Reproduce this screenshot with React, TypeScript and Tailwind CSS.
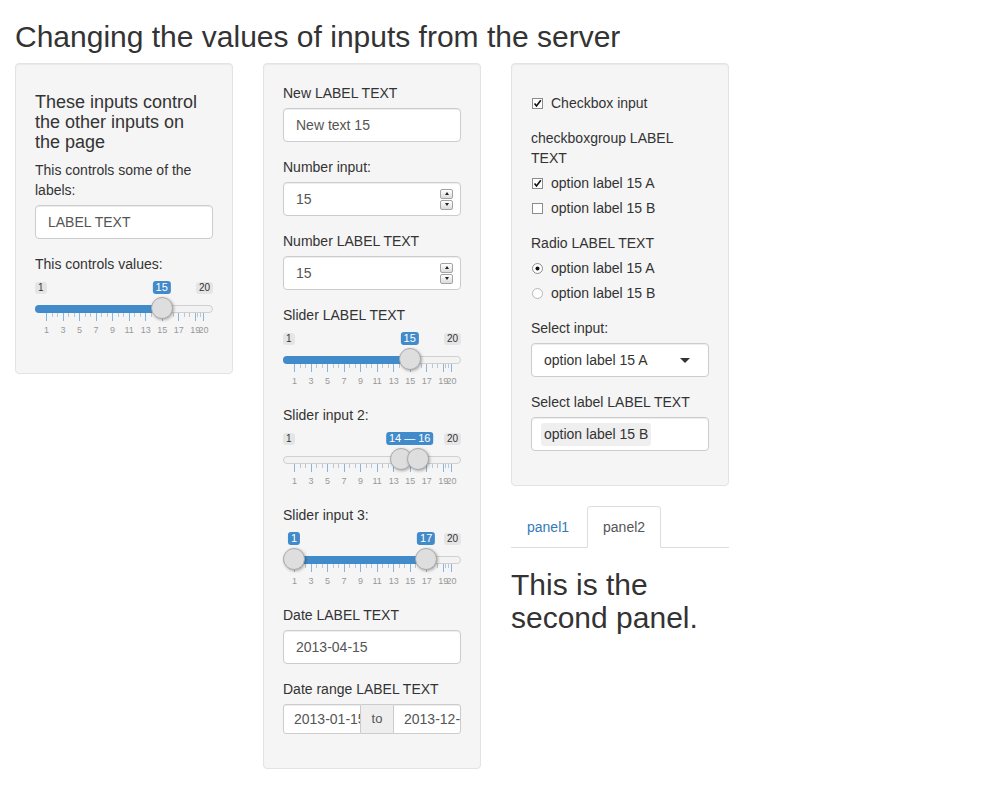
import React from "react";

const pos = (v: number) => 11 + ((v - 1) * 157) / 19;
const majors = [1, 3, 5, 7, 9, 11, 13, 15, 17, 19, 20];
const minors: number[] = [];
for (let i = 0; i < majors.length - 1; i++) {
  const a = majors[i];
  const b = majors[i + 1];
  minors.push(a + (b - a) / 3, a + ((b - a) * 2) / 3);
}

const Label = ({ children }: { children: React.ReactNode }) => (
  <label className="inline-block max-w-full mb-[5px]">{children}</label>
);

const FormGroup = ({ children }: { children: React.ReactNode }) => (
  <div className="mb-[15px]">{children}</div>
);

const TextBox = ({ value }: { value: string }) => (
  <div className="h-[34px] flex items-center px-[12px] bg-white border border-[#ccc] rounded-[4px] shadow-[inset_0_1px_1px_rgba(0,0,0,0.075)] text-[#555]">
    {value}
  </div>
);

const NumberBox = ({ value }: { value: string }) => (
  <div className="h-[34px] flex items-center justify-between pl-[12px] pr-[7px] bg-white border border-[#ccc] rounded-[4px] shadow-[inset_0_1px_1px_rgba(0,0,0,0.075)] text-[#555]">
    <span>{value}</span>
    <div className="flex flex-col gap-[1px]">
      <div className="w-[13px] h-[10px] flex items-center justify-center border border-[#a3a3a3] rounded-[2px] bg-gradient-to-b from-white to-[#dcdcdc]">
        <div className="w-0 h-0 border-x-[2px] border-b-[3px] border-x-transparent border-b-[#222]" />
      </div>
      <div className="w-[13px] h-[10px] flex items-center justify-center border border-[#a3a3a3] rounded-[2px] bg-gradient-to-b from-white to-[#dcdcdc]">
        <div className="w-0 h-0 border-x-[2px] border-t-[3px] border-x-transparent border-t-[#222]" />
      </div>
    </div>
  </div>
);

const Bubble = ({ at, text }: { at: number; text: string }) => (
  <div
    className="absolute top-[2px] -translate-x-1/2 h-[13px] px-[3px] rounded-[3px] bg-[#428bca] text-white text-[11px] leading-[13px] whitespace-nowrap"
    style={{ left: at }}
  >
    {text}
  </div>
);

const Handle = ({ at }: { at: number }) => (
  <div
    className="absolute top-[18px] -translate-x-1/2 w-[22px] h-[22px] rounded-full bg-[#dedede] border border-[#ababab] shadow-[1px_1px_3px_rgba(0,0,0,0.3)]"
    style={{ left: at }}
  />
);

const Slider = ({
  from,
  to,
  showMin = true,
}: {
  from?: number;
  to: number;
  showMin?: boolean;
}) => {
  const left = from === undefined ? 0 : pos(from);
  const right = pos(to);
  const merged = from !== undefined && right - pos(from) < 30;
  return (
    <div className="relative h-[60px] w-full">
      {showMin && (
        <div className="absolute left-0 top-[3px] h-[12px] px-[3px] rounded-[3px] bg-[#e5e5e5] text-[#333] text-[10px] leading-[12px]">
          1
        </div>
      )}
      <div className="absolute right-0 top-[3px] h-[12px] px-[3px] rounded-[3px] bg-[#e5e5e5] text-[#333] text-[10px] leading-[12px]">
        20
      </div>
      <div className="absolute left-0 right-0 top-[26px] h-[8px] rounded-full bg-[#f2f2f2] border border-[#d0d0d0]" />
      <div
        className={`absolute top-[26px] h-[8px] bg-[#428bca] ${from === undefined ? "rounded-l-full" : ""}`}
        style={{ left, width: right - left }}
      />
      {majors.map((v) => (
        <div
          key={`M${v}`}
          className="absolute top-[34px] w-px h-[8px] bg-[#8ab4de]"
          style={{ left: Math.round(pos(v)) }}
        />
      ))}
      {minors.map((v, i) => (
        <div
          key={`m${i}`}
          className="absolute top-[34px] w-px h-[4px] bg-[#b9c6d4]"
          style={{ left: Math.round(pos(v)) }}
        />
      ))}
      {majors.map((v) => (
        <div
          key={`n${v}`}
          className="absolute top-[46px] -translate-x-1/2 text-[9px] leading-[11px] text-[#999]"
          style={{ left: pos(v) + 0.5 }}
        >
          {v}
        </div>
      ))}
      {from !== undefined && <Handle at={pos(from)} />}
      <Handle at={right} />
      {from === undefined && <Bubble at={right} text={String(to)} />}
      {from !== undefined && merged && (
        <Bubble at={(pos(from) + right) / 2} text={`${from} — ${to}`} />
      )}
      {from !== undefined && !merged && (
        <>
          <Bubble at={pos(from)} text={String(from)} />
          <Bubble at={right} text={String(to)} />
        </>
      )}
    </div>
  );
};

const CheckBox = ({ checked }: { checked: boolean }) => (
  <svg width="11" height="11" viewBox="0 0 11 11" className="shrink-0 ml-[1px] mr-[8px]">
    <rect x="0.5" y="0.5" width="10" height="10" fill="#fff" stroke="#8c8c8c" />
    {checked && (
      <path d="M2.5 5.5 L4.5 8 L8.8 2.2" fill="none" stroke="#111" strokeWidth="1.6" />
    )}
  </svg>
);

const RadioDot = ({ checked }: { checked: boolean }) => (
  <svg width="11" height="11" viewBox="0 0 11 11" className="shrink-0 ml-[1px] mr-[8px]">
    <circle cx="5.5" cy="5.5" r="5" fill="#fff" stroke={checked ? "#8c8c8c" : "#b5b5b5"} />
    {checked && <circle cx="5.5" cy="5.5" r="2" fill="#111" />}
  </svg>
);

const Option = ({ children, mark }: { children: React.ReactNode; mark: React.ReactNode }) => (
  <div className="flex items-center h-[20px]">
    {mark}
    <span>{children}</span>
  </div>
);

const Well = ({ children }: { children: React.ReactNode }) => (
  <div className="bg-[#f5f5f5] border border-[#e3e3e3] rounded-[4px] p-[19px] mb-[20px] shadow-[inset_0_1px_1px_rgba(0,0,0,0.05)]">
    {children}
  </div>
);

export default function App() {
  return (
    <div className="min-h-[789px] bg-white px-[15px] text-[14px] leading-[20px] text-[#333] font-['Liberation_Sans','Arial',sans-serif]">
      <h2 className="mt-[20px] mb-[10px] text-[30px] leading-[33px] font-medium">
        Changing the values of inputs from the server
      </h2>
      <div className="flex gap-[30px] items-start">
        <div className="w-[218px] shrink-0">
          <Well>
            <h4 className="mt-[10px] mb-[8px] text-[18px] leading-[1.1] font-medium">
              These inputs control the other inputs on the page
            </h4>
            <FormGroup>
              <Label>This controls some of the labels:</Label>
              <TextBox value="LABEL TEXT" />
            </FormGroup>
            <FormGroup>
              <Label>This controls values:</Label>
              <Slider to={15} />
            </FormGroup>
          </Well>
        </div>

        <div className="w-[218px] shrink-0">
          <Well>
            <FormGroup>
              <Label>New LABEL TEXT</Label>
              <TextBox value="New text 15" />
            </FormGroup>
            <FormGroup>
              <Label>Number input:</Label>
              <NumberBox value="15" />
            </FormGroup>
            <FormGroup>
              <Label>Number LABEL TEXT</Label>
              <NumberBox value="15" />
            </FormGroup>
            <FormGroup>
              <Label>Slider LABEL TEXT</Label>
              <Slider to={15} />
            </FormGroup>
            <FormGroup>
              <Label>Slider input 2:</Label>
              <Slider from={14} to={16} />
            </FormGroup>
            <FormGroup>
              <Label>Slider input 3:</Label>
              <Slider from={1} to={17} showMin={false} />
            </FormGroup>
            <FormGroup>
              <Label>Date LABEL TEXT</Label>
              <TextBox value="2013-04-15" />
            </FormGroup>
            <FormGroup>
              <Label>Date range LABEL TEXT</Label>
              <div className="flex h-[30px] text-[14px] text-[#555]">
                <div className="w-[78px] pl-[10px] flex items-center overflow-hidden whitespace-nowrap bg-white border border-[#ccc] rounded-l-[3px] shadow-[inset_0_1px_1px_rgba(0,0,0,0.075)]">
                  2013-01-15
                </div>
                <div className="w-[32px] flex items-center justify-center bg-[#eee] border-y border-[#ccc] text-[13px]">
                  to
                </div>
                <div className="flex-1 min-w-0 pl-[10px] flex items-center overflow-hidden whitespace-nowrap bg-white border border-[#ccc] rounded-r-[3px] shadow-[inset_0_1px_1px_rgba(0,0,0,0.075)]">
                  2013-12-15
                </div>
              </div>
            </FormGroup>
          </Well>
        </div>

        <div className="w-[218px] shrink-0">
          <Well>
            <div className="mt-[10px] mb-[15px]">
              <Option mark={<CheckBox checked />}>Checkbox input</Option>
            </div>
            <FormGroup>
              <Label>checkboxgroup LABEL TEXT</Label>
              <div className="flex flex-col gap-[5px]">
                <Option mark={<CheckBox checked />}>option label 15 A</Option>
                <Option mark={<CheckBox checked={false} />}>option label 15 B</Option>
              </div>
            </FormGroup>
            <FormGroup>
              <Label>Radio LABEL TEXT</Label>
              <div className="flex flex-col gap-[5px]">
                <Option mark={<RadioDot checked />}>option label 15 A</Option>
                <Option mark={<RadioDot checked={false} />}>option label 15 B</Option>
              </div>
            </FormGroup>
            <FormGroup>
              <Label>Select input:</Label>
              <div className="h-[34px] flex items-center justify-between pl-[12px] pr-[18px] bg-white border border-[#ccc] rounded-[4px] shadow-[inset_0_1px_1px_rgba(0,0,0,0.075)] text-[#333]">
                <span>option label 15 A</span>
                <div className="w-0 h-0 border-x-[5px] border-t-[5px] border-x-transparent border-t-[#333]" />
              </div>
            </FormGroup>
            <FormGroup>
              <Label>Select label LABEL TEXT</Label>
              <div className="h-[34px] flex items-center pl-[9px] bg-white border border-[#ccc] rounded-[4px] shadow-[inset_0_1px_1px_rgba(0,0,0,0.075)] text-[#333]">
                <span className="h-[23px] flex items-center px-[3px] bg-[#efefef] rounded-[3px]">
                  option label 15 B
                </span>
              </div>
            </FormGroup>
          </Well>

          <ul className="flex border-b border-[#ddd]">
            <li className="-mb-px mr-[2px]">
              <a className="block px-[15px] py-[10px] border border-transparent rounded-t-[4px] text-[#337ab7]">
                panel1
              </a>
            </li>
            <li className="-mb-px mr-[2px]">
              <a className="block px-[15px] py-[10px] border border-[#ddd] border-b-transparent rounded-t-[4px] bg-white text-[#555]">
                panel2
              </a>
            </li>
          </ul>
          <h2 className="mt-[20px] mb-[10px] text-[30px] leading-[33px] font-medium">
            This is the second panel.
          </h2>
        </div>
      </div>
    </div>
  );
}
